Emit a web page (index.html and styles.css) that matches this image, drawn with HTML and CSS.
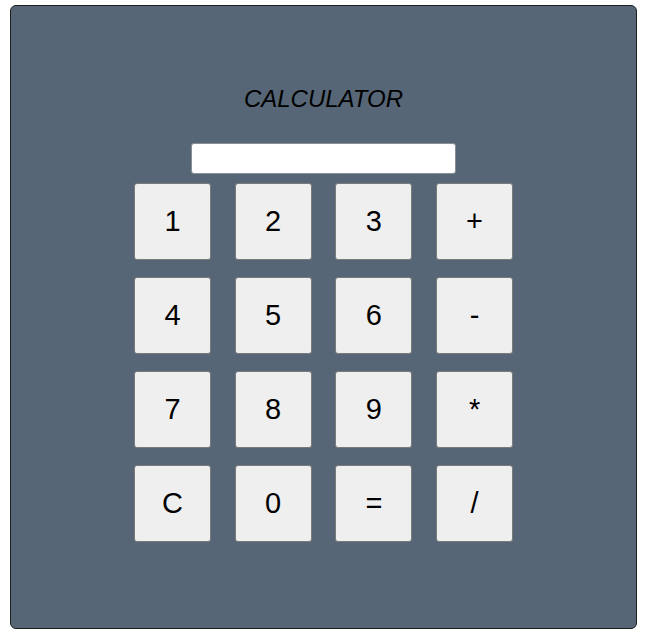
FILE: index.html
```html
<!DOCTYPE html>
<html>
<head>
<meta charset="utf-8">
<link rel="stylesheet" href="styles.css">
</head>
<body>
<div class="calc">
  <h1 class="title">CALCULATOR</h1>
  <input class="display" type="text">
  <div class="keys">
    <button class="key">1</button>
    <button class="key">2</button>
    <button class="key">3</button>
    <button class="key">+</button>
    <button class="key">4</button>
    <button class="key">5</button>
    <button class="key">6</button>
    <button class="key">-</button>
    <button class="key">7</button>
    <button class="key">8</button>
    <button class="key">9</button>
    <button class="key">*</button>
    <button class="key">C</button>
    <button class="key">0</button>
    <button class="key">=</button>
    <button class="key">/</button>
  </div>
</div>
</body>
</html>
```

FILE: styles.css
```css
html, body {
  margin: 0;
  padding: 0;
  background: #ffffff;
}

body {
  padding: 5px 0 0 10px;
  font-family: "Liberation Sans", Arial, sans-serif;
}

.calc {
  box-sizing: border-box;
  width: 627px;
  height: 624px;
  background: #566676;
  border: 1px solid #1e1e1e;
  border-radius: 6px;
  display: flex;
  flex-direction: column;
  align-items: center;
  padding-top: 79px;
}

.title {
  margin: 0;
  font-size: 24px;
  line-height: 28px;
  font-weight: normal;
  font-style: italic;
  color: #000;
}

.display {
  box-sizing: border-box;
  margin-top: 30px;
  width: 265px;
  height: 31px;
  background: #fff;
  border: 1px solid #8a8f96;
  border-radius: 3px;
  padding: 0;
  outline: none;
}

.keys {
  margin-top: 9px;
  display: grid;
  grid-template-columns: repeat(4, 77px);
  grid-auto-rows: 77px;
  column-gap: 23.7px;
  row-gap: 17px;
}

.key {
  box-sizing: border-box;
  width: 77px;
  height: 77px;
  margin: 0;
  padding: 0;
  background: #efefef;
  border: 1px solid #7a7a7a;
  border-radius: 3px;
  font-family: "Liberation Sans", Arial, sans-serif;
  font-size: 29px;
  color: #000;
}
```
